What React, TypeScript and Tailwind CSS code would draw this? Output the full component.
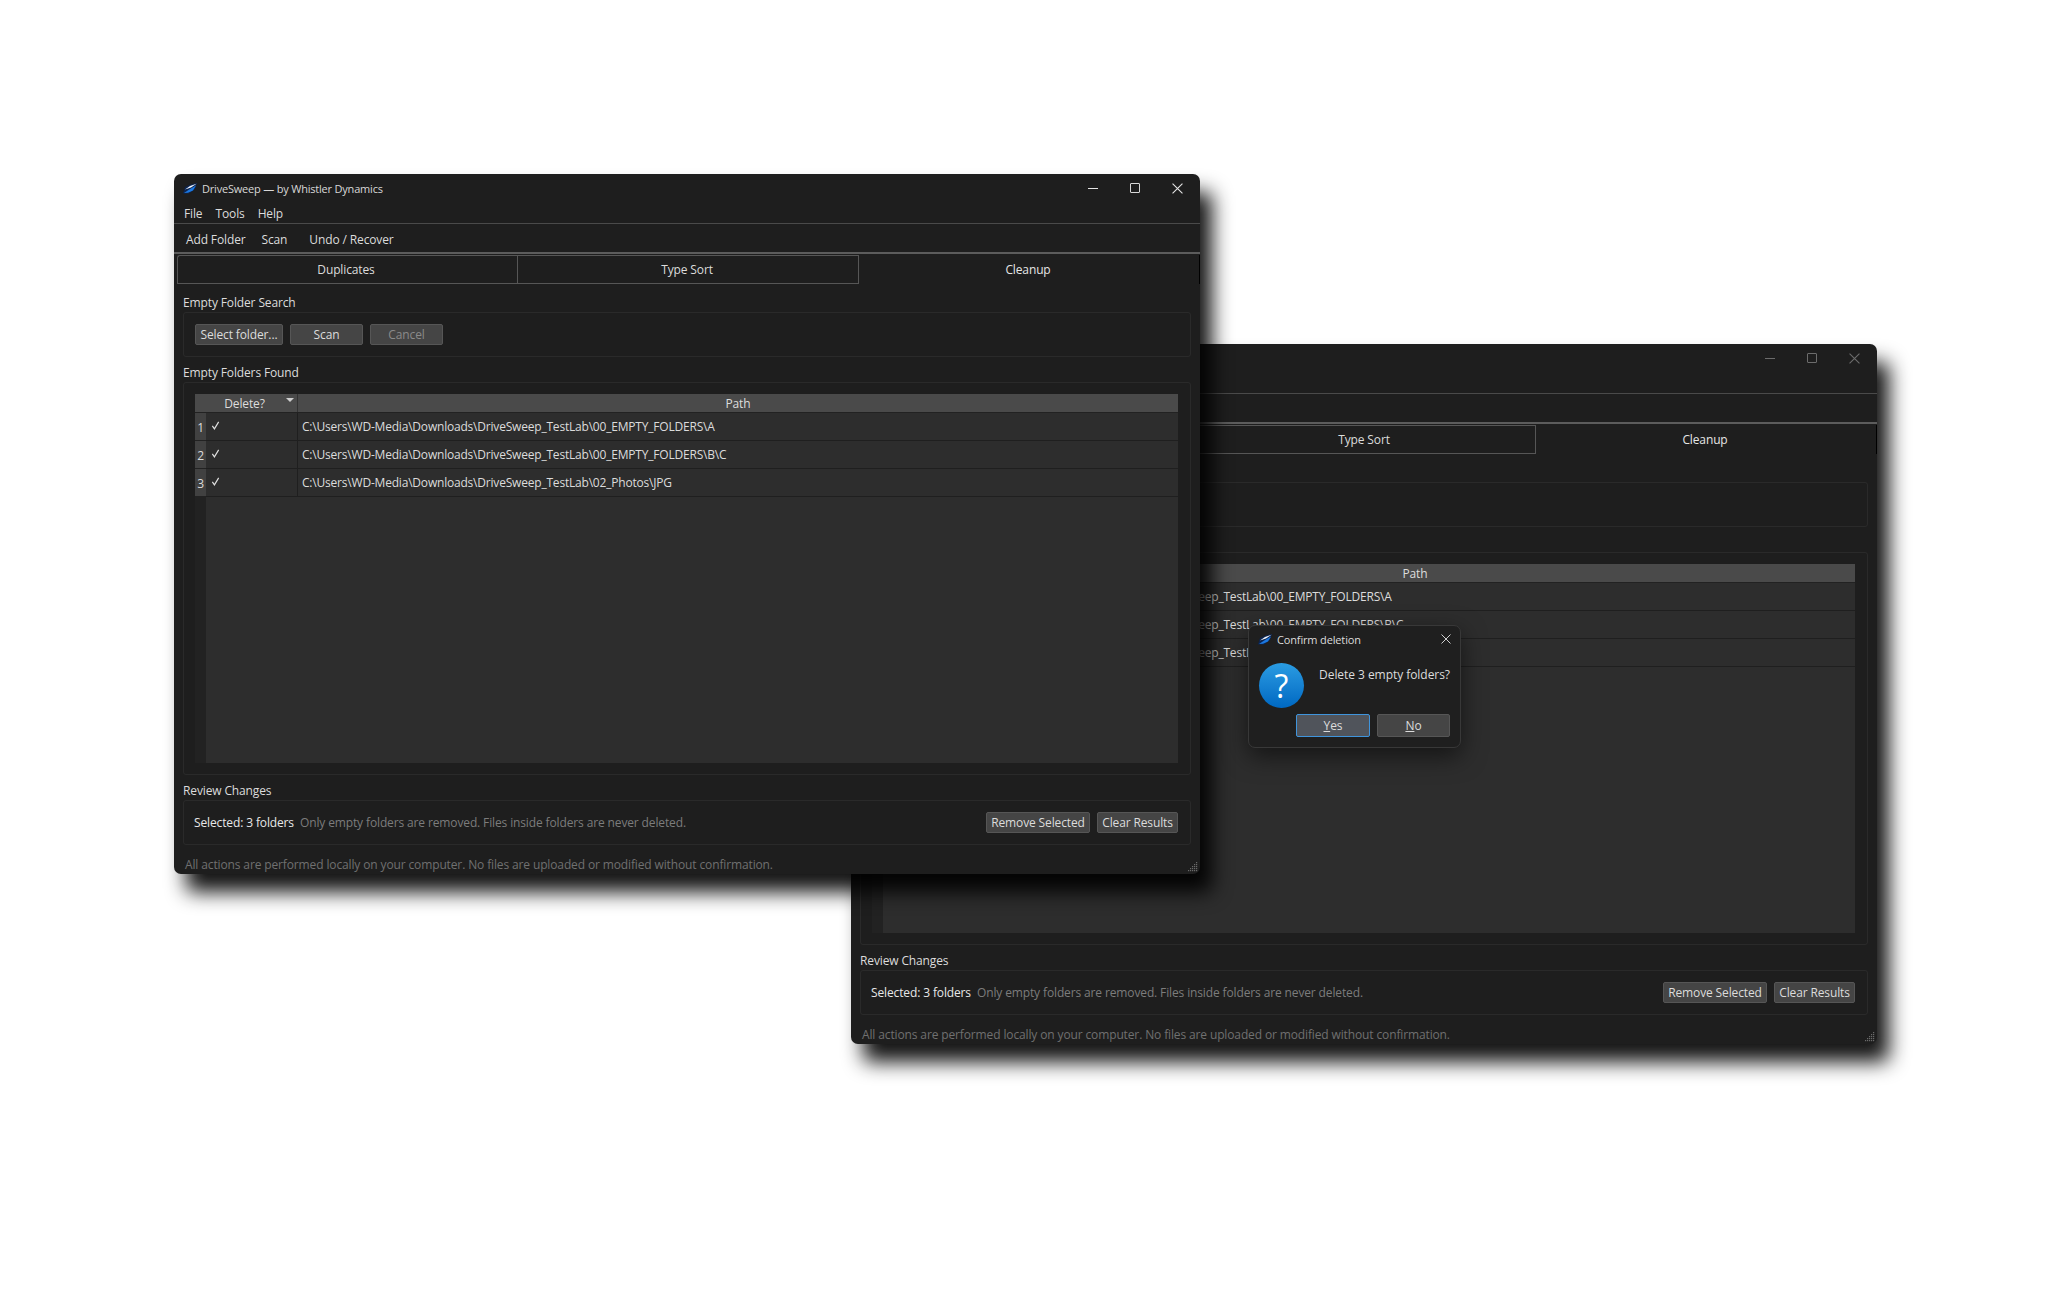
const font = "font-['Open_Sans','Noto_Sans',sans-serif]";

const rows = [
  "C:\\Users\\WD-Media\\Downloads\\DriveSweep_TestLab\\00_EMPTY_FOLDERS\\A",
  "C:\\Users\\WD-Media\\Downloads\\DriveSweep_TestLab\\00_EMPTY_FOLDERS\\B\\C",
  "C:\\Users\\WD-Media\\Downloads\\DriveSweep_TestLab\\02_Photos\\JPG",
];

function Logo({ className }: { className: string }) {
  return (
    <svg viewBox="0 0 14 11" className={className}>
      <path d="M0 10.5 L2 4 L8 1.5 L14 0 L12 6 L6 10.5 Z" fill="#0c2450" />
      <path d="M2 6.5 L7 3 L13.5 0.8 L8 4.4 Z" fill="#eef3fa" />
      <path d="M1 10 L7 6 L13 2.5 L10 7.4 L5 9.8 Z" fill="#1c78e0" />
    </svg>
  );
}

function Btn({ label, w, dim }: { label: string; w: string; dim?: boolean }) {
  return (
    <div
      className={`${w} h-[21px] flex items-center justify-center rounded-[2px] border border-[#565656] bg-[#454545] ${
        dim ? "text-[#8a8a8a]" : "text-[#dcdcdc]"
      }`}
    >
      {label}
    </div>
  );
}

function Grip() {
  const dots = [
    [8, 0],
    [6, 2],
    [8, 2],
    [4, 4],
    [6, 4],
    [8, 4],
    [2, 6],
    [4, 6],
    [6, 6],
    [8, 6],
    [0, 8],
    [2, 8],
    [4, 8],
    [6, 8],
    [8, 8],
  ];
  return (
    <svg viewBox="0 0 10 10" className="absolute right-[2px] bottom-[2px] w-[10px] h-[10px]">
      {dots.map(([x, y]) => (
        <rect key={`${x}-${y}`} x={x} y={y} width="1.2" height="1.2" fill="#6a6a6a" />
      ))}
    </svg>
  );
}

function AppWindow({ className, active }: { className: string; active?: boolean }) {
  const ctl = active ? "#e4e4e4" : "#6c6c6c";
  return (
    <div
      className={`absolute w-[1026px] h-[700px] rounded-[7px] bg-[#1e1e1e] text-[12px] leading-none tracking-[-0.13px] text-[#dcdcdc] flex flex-col shadow-[12px_18px_20px_rgba(0,0,0,0.92)] ${font} ${className}`}
    >
      {/* title bar */}
      <div className="h-[30px] flex items-center pl-[9px] shrink-0">
        <Logo className="w-[14px] h-[11px] mb-[2px]" />
        <span className="ml-[5px] mb-[2px] text-[11px] tracking-[-0.2px] text-[#d8d8d8]">DriveSweep — by Whistler Dynamics</span>
        <div className="ml-auto flex items-center gap-[32px] pr-[17px] pb-[2px]">
          <div className={`w-[10px] h-[1px] ${active ? "bg-[#e4e4e4]" : "bg-[#6c6c6c]"}`} />
          <div className={`w-[10px] h-[10px] rounded-[1px] border ${active ? "border-[#d8d8d8]" : "border-[#6c6c6c]"}`} />
          <svg viewBox="0 0 10 10" className="w-[11px] h-[11px]">
            <path d="M0.5 0.5 L9.5 9.5 M9.5 0.5 L0.5 9.5" stroke={ctl} strokeWidth="1" />
          </svg>
        </div>
      </div>
      {/* menu */}
      <div className="h-[20px] flex items-center gap-[13px] pl-[10px] border-b border-[#4a4a4a] shrink-0">
        <span>File</span>
        <span>Tools</span>
        <span>Help</span>
      </div>
      {/* toolbar */}
      <div className="h-[30px] flex items-center pl-[12px] pt-[3px] border-b-2 border-[#5c5c5c] shrink-0">
        <span>Add Folder</span>
        <span className="ml-[16px]">Scan</span>
        <span className="ml-[22px]">Undo / Recover</span>
      </div>
      {/* tabs */}
      <div className="h-[29px] flex shrink-0 mt-[1px]">
        <div className="ml-[3px] w-[340px] pr-[3px] flex items-center justify-center border-t border-l border-b border-[#565656] rounded-tl-[3px]">
          Duplicates
        </div>
        <div className="w-[342px] pr-[2px] flex items-center justify-center border border-[#565656]">Type Sort</div>
        <div className="flex-1 pr-[2px] flex items-center justify-center text-[#e6e6e6] border-r border-black">Cleanup</div>
      </div>
      {/* content */}
      <div className="flex-1 flex flex-col pl-[9px] pr-[9px] pt-[12px] min-h-0">
        <div className="h-[13px] flex items-center">Empty Folder Search</div>
        <div className="mt-[3px] h-[45px] rounded-[3px] border border-[#2a2a2a] flex items-center gap-[7px] pl-[11px]">
          <Btn label="Select folder..." w="w-[88px]" />
          <Btn label="Scan" w="w-[73px]" />
          <Btn label="Cancel" w="w-[73px]" dim />
        </div>
        <div className="mt-[9px] h-[13px] flex items-center">Empty Folders Found</div>
        <div className="mt-[3px] h-[393px] rounded-[3px] border border-[#2a2a2a] pl-[11px] pr-[12px] py-[11px]">
          <div className="h-full flex flex-col">
            <div className="h-[18px] flex bg-[#4a4a4a] text-[#dddddd] shrink-0">
              <div className="w-[11px]" />
              <div className="w-[92px] pr-[14px] pt-[1px] relative flex items-center justify-center border-r border-[#333333]">
                Delete?
                <div className="absolute right-[3px] top-[4px] w-0 h-0 border-x-[4px] border-x-transparent border-t-[4px] border-t-[#cfcfcf]" />
              </div>
              <div className="flex-1 pt-[1px] flex items-center justify-center">Path</div>
            </div>
            <div className="flex-1 flex pt-[1px] bg-[#222222]">
              <div className="w-[11px] shrink-0 flex flex-col">
                {rows.map((_, i) => (
                  <div key={i} className="h-[28px] border-b border-[#222222] bg-[#414141] flex items-end justify-center pb-[6px]">
                    {i + 1}
                  </div>
                ))}
              </div>
              <div className="flex-1 flex flex-col bg-[#2d2d2d] tracking-[-0.2px]">
                {rows.map((r) => (
                  <div key={r} className="h-[28px] flex border-b border-[#1f1f1f]">
                    <div className="w-[92px] border-r border-[#1f1f1f] flex items-center pl-[5px] pb-[2px]">
                      <svg viewBox="0 0 10 10" className="w-[9px] h-[9px]">
                        <path d="M1.5 5.5 L3.8 8.8 L8.5 1" stroke="#e0e0e0" strokeWidth="1.3" fill="none" />
                      </svg>
                    </div>
                    <div className="flex-1 flex items-center pl-[4px]">{r}</div>
                  </div>
                ))}
              </div>
            </div>
          </div>
        </div>
        <div className="mt-[9px] h-[13px] flex items-center">Review Changes</div>
        <div className="mt-[3px] h-[45px] rounded-[3px] border border-[#2a2a2a] flex items-center pl-[10px] pr-[12px]">
          <span className="text-[#e8e8e8]">Selected: 3 folders</span>
          <span className="ml-[6px] text-[#7c7c7c]">Only empty folders are removed. Files inside folders are never deleted.</span>
          <div className="ml-auto flex gap-[7px]">
            <Btn label="Remove Selected" w="w-[104px]" />
            <Btn label="Clear Results" w="w-[81px]" />
          </div>
        </div>
        <div className="mt-[14px] pl-[2px] text-[#707070]">
          All actions are performed locally on your computer. No files are uploaded or modified without confirmation.
        </div>
      </div>
      <Grip />
    </div>
  );
}

function ConfirmDialog() {
  return (
    <div
      className={`absolute left-[1248px] top-[625px] w-[213px] h-[123px] rounded-[7px] border border-[#383838] bg-[#1f1f1f] text-[12px] leading-none tracking-[-0.05px] text-[#dcdcdc] shadow-[0_8px_24px_rgba(0,0,0,0.55)] flex flex-col ${font}`}
    >
      <div className="h-[26px] flex items-center pl-[9px] pr-[9px] shrink-0">
        <Logo className="w-[14px] h-[11px]" />
        <span className="ml-[5px] text-[11px] tracking-[-0.15px]">Confirm deletion</span>
        <svg viewBox="0 0 10 10" className="ml-auto w-[10px] h-[10px]">
          <path d="M0.5 0.5 L9.5 9.5 M9.5 0.5 L0.5 9.5" stroke="#d0d0d0" strokeWidth="1" />
        </svg>
      </div>
      <div className="flex pl-[10px] pr-[10px] mt-[11px]">
        <div className="w-[45px] h-[45px] rounded-full bg-gradient-to-b from-[#2a9ce2] to-[#0068c2] flex items-center justify-center text-white text-[32px] shrink-0">
          ?
        </div>
        <div className="ml-auto mt-[6px]">Delete 3 empty folders?</div>
      </div>
      <div className="flex justify-end gap-[7px] pr-[10px] mt-[6px]">
        <div className="w-[74px] h-[23px] rounded-[2px] border border-[#3f94dc] bg-[#50545b] flex items-center justify-center">
          <span>
            <span className="underline">Y</span>es
          </span>
        </div>
        <div className="w-[73px] h-[23px] rounded-[2px] border border-[#565656] bg-[#454545] flex items-center justify-center">
          <span>
            <span className="underline">N</span>o
          </span>
        </div>
      </div>
    </div>
  );
}

export default function App() {
  return (
    <div className="relative w-[2048px] h-[1303px] overflow-hidden bg-white">
      <AppWindow className="left-[851px] top-[344px]" />
      <ConfirmDialog />
      <AppWindow className="left-[174px] top-[174px]" active />
    </div>
  );
}
